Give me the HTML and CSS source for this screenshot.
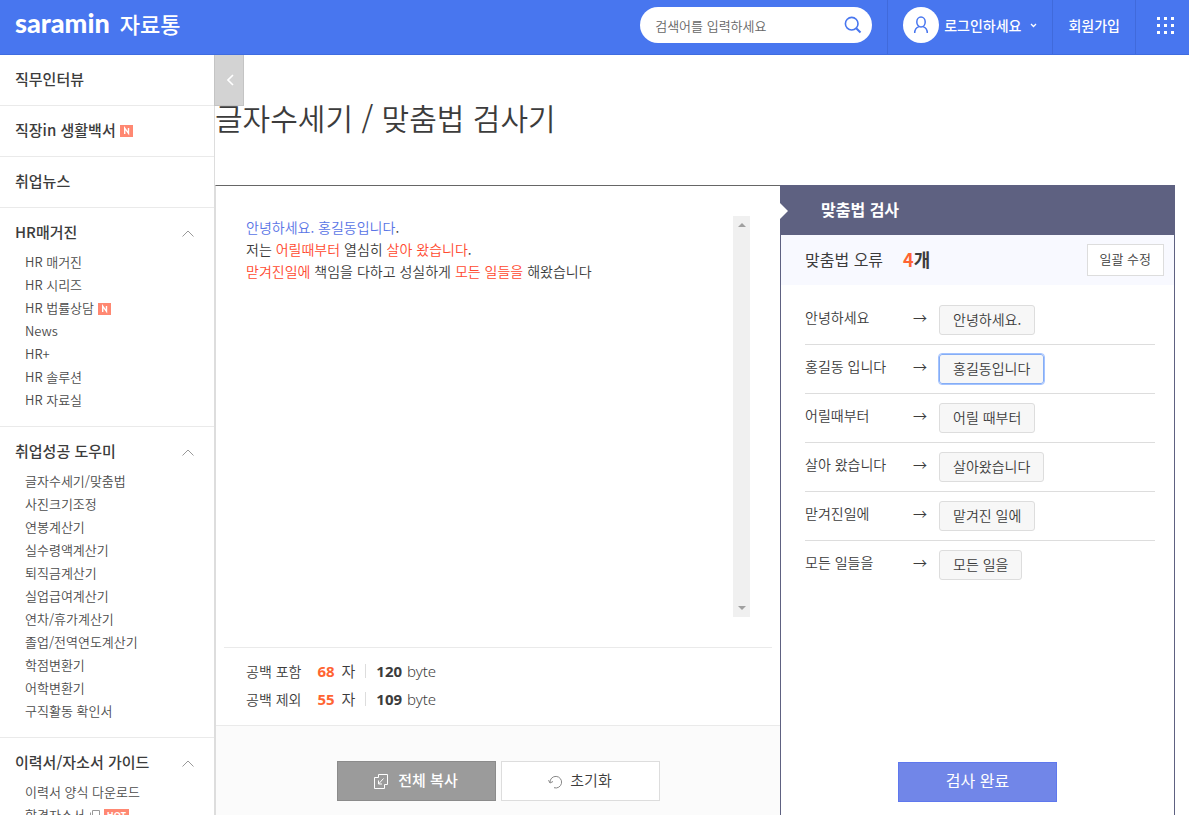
FILE: index.html
```html
<!DOCTYPE html>
<html lang="ko">
<head>
<meta charset="utf-8">
<meta name="viewport" content="width=device-width, initial-scale=1">
<title>글자수세기 / 맞춤법 검사기</title>
<link rel="stylesheet" href="styles.css">
</head>
<body>
<header class="topbar">
  <a class="logo" href="#"><span class="logo-brand">saramin</span><span class="logo-sub">자료통</span></a>
  <form class="search">
    <input class="search-input" type="text" placeholder="검색어를 입력하세요" aria-label="검색어">
    <button class="search-btn" type="button" aria-label="검색">
      <svg width="18" height="18" viewBox="0 0 18 18" fill="none" stroke="#4876ef" stroke-width="1.6"><circle cx="7.7" cy="7.7" r="6.3"/><path d="M12.2 12.2l4.3 4.3" stroke-width="2"/></svg>
    </button>
  </form>
  <nav class="user-nav">
    <a class="user-cell login" href="#">
      <span class="avatar"><svg width="16" height="18" viewBox="0 0 16 18" fill="none" stroke="#4876ef" stroke-width="1.5"><ellipse cx="8" cy="6" rx="4.2" ry="5"/><path d="M1.7 17c0-3.4 1.7-5.6 4.4-6.4M14.3 17c0-3.4-1.7-5.6-4.4-6.4"/></svg></span>
      <span>로그인하세요</span>
      <svg class="caret" width="7" height="5" viewBox="0 0 7 5" fill="none" stroke="#fff" stroke-width="1.3"><path d="M1 1l2.5 2.5L6 1"/></svg>
    </a>
    <a class="user-cell" href="#">회원가입</a>
    <button class="user-cell apps" type="button" aria-label="전체 서비스">
      <svg width="17" height="17" viewBox="0 0 17 17" fill="#fff"><path d="M0 0h3v3H0zM7 0h3v3H7zM14 0h3v3h-3zM0 7h3v3H0zM7 7h3v3H7zM14 7h3v3h-3zM0 14h3v3H0zM7 14h3v3H7zM14 14h3v3h-3z"/></svg>
    </button>
  </nav>
</header>

<div class="shell">
  <aside class="sidebar">
    <section class="group"><h2 class="group-title"><a href="#">직무인터뷰</a></h2></section>
    <section class="group"><h2 class="group-title"><a href="#">직장in 생활백서</a><svg class="badge-new" width="13" height="12" viewBox="0 0 13 12" role="img" aria-label="새 글"><path fill="#ff8872" d="M0 0h13v12H0z"/><path d="M4.7 9V3.2l3.8 5.2V3" fill="none" stroke="#fff" stroke-width="1.4"/></svg></h2></section>
    <section class="group"><h2 class="group-title"><a href="#">취업뉴스</a></h2></section>
    <section class="group">
      <h2 class="group-title"><a href="#">HR매거진</a><svg class="fold" width="12" height="7" viewBox="0 0 12 7" fill="none" stroke="#999"><path d="M.5 6.500L6 1l5.500 5.500"/></svg></h2>
      <ul class="links">
        <li><a href="#">HR 매거진</a></li>
        <li><a href="#">HR 시리즈</a></li>
        <li><a href="#">HR 법률상담</a><svg class="badge-new" width="13" height="12" viewBox="0 0 13 12" role="img" aria-label="새 글"><path fill="#ff8872" d="M0 0h13v12H0z"/><path d="M4.700 9V3.200l3.800 5.200V3" fill="none" stroke="#fff" stroke-width="1.400"/></svg></li>
        <li><a href="#">News</a></li>
        <li><a href="#">HR+</a></li>
        <li><a href="#">HR 솔루션</a></li>
        <li><a href="#">HR 자료실</a></li>
      </ul>
    </section>
    <section class="group">
      <h2 class="group-title"><a href="#">취업성공 도우미</a><svg class="fold" width="12" height="7" viewBox="0 0 12 7" fill="none" stroke="#999"><path d="M.5 6.500L6 1l5.500 5.500"/></svg></h2>
      <ul class="links">
        <li><a href="#">글자수세기/맞춤법</a></li>
        <li><a href="#">사진크기조정</a></li>
        <li><a href="#">연봉계산기</a></li>
        <li><a href="#">실수령액계산기</a></li>
        <li><a href="#">퇴직금계산기</a></li>
        <li><a href="#">실업급여계산기</a></li>
        <li><a href="#">연차/휴가계산기</a></li>
        <li><a href="#">졸업/전역연도계산기</a></li>
        <li><a href="#">학점변환기</a></li>
        <li><a href="#">어학변환기</a></li>
        <li><a href="#">구직활동 확인서</a></li>
      </ul>
    </section>
    <section class="group">
      <h2 class="group-title"><a href="#">이력서/자소서 가이드</a><svg class="fold" width="12" height="7" viewBox="0 0 12 7" fill="none" stroke="#999"><path d="M.5 6.500L6 1l5.500 5.500"/></svg></h2>
      <ul class="links">
        <li><a href="#">이력서 양식 다운로드</a></li>
        <li><a href="#">합격자소서</a><svg class="window-icon" width="11" height="10" viewBox="0 0 11 10" fill="none" stroke="#999"><path d="M3.500.5h7v7h-7zM1.500 2.500v7h7"/></svg><span class="badge-hot">HOT</span></li>
      </ul>
    </section>
  </aside>

  <main class="content">
    <button class="side-toggle" type="button" aria-label="메뉴 접기">
      <svg width="7" height="12" viewBox="0 0 7 12" fill="none" stroke="#fff" stroke-width="1.600"><path d="M6 1L1 6l5 5"/></svg>
    </button>
    <h1 class="page-title">글자수세기 / 맞춤법 검사기</h1>
    <div class="workspace">
      <section class="editor">
        <div class="editor-area">
          <div class="editor-text" contenteditable="true" role="textbox" aria-multiline="true" aria-label="내용">
            <p><span class="fixed">안녕하세요. 홍길동입니다</span>.</p>
            <p>저는 <span class="wrong">어릴때부터</span> 열심히 <span class="wrong">살아 왔습니다</span>.</p>
            <p><span class="wrong">맏겨진일에</span> 책임을 다하고 성실하게 <span class="wrong">모든 일들을</span> 해왔습니다</p>
          </div>
          <div class="scroll-track" aria-hidden="true">
            <svg width="8" height="4" viewBox="0 0 8 4" fill="#a0a0a0"><path d="M0 4l4-4 4 4z"/></svg>
            <svg width="8" height="4" viewBox="0 0 8 4" fill="#a0a0a0"><path d="M0 0l4 4 4-4z"/></svg>
          </div>
        </div>
        <div class="counts">
          <p class="count-row"><span class="count-label">공백 포함</span><span class="chars"><b>68</b> 자</span><span class="bytes"><b>120</b> byte</span></p>
          <p class="count-row"><span class="count-label">공백 제외</span><span class="chars"><b>55</b> 자</span><span class="bytes"><b>109</b> byte</span></p>
        </div>
        <div class="editor-actions">
          <button class="action copy" type="button"><svg width="14" height="15" viewBox="0 0 14 15" fill="none" stroke="#fff"><path d="M4.500 3.500v-3h9v10h-3M4.500 3.500h-4v11h10v-4M9.500 4.500l-5 5.500M4.500 6.500V10H8"/></svg>전체 복사</button>
          <button class="action reset" type="button"><svg width="14" height="14" viewBox="0 0 14 14" fill="none" stroke="#888"><path d="M2 7.500A5.800 5.800 0 1 1 6 12.700M.5 5.200L2 8l3-1.500"/></svg>초기화</button>
        </div>
      </section>

      <section class="checker">
        <h2 class="checker-title">맞춤법 검사</h2>
        <div class="checker-sum">
          <span>맞춤법 오류</span><strong class="sum-count"><em>4</em>개</strong>
          <button class="fix-all" type="button">일괄 수정</button>
        </div>
        <ul class="fixes">
          <li class="fix"><span class="before">안녕하세요</span><span class="arrow">→</span><button class="after" type="button">안녕하세요.</button></li>
          <li class="fix"><span class="before">홍길동 입니다</span><span class="arrow">→</span><button class="after is-focused" type="button">홍길동입니다</button></li>
          <li class="fix"><span class="before">어릴때부터</span><span class="arrow">→</span><button class="after" type="button">어릴 때부터</button></li>
          <li class="fix"><span class="before">살아 왔습니다</span><span class="arrow">→</span><button class="after" type="button">살아왔습니다</button></li>
          <li class="fix"><span class="before">맏겨진일에</span><span class="arrow">→</span><button class="after" type="button">맡겨진 일에</button></li>
          <li class="fix"><span class="before">모든 일들을</span><span class="arrow">→</span><button class="after" type="button">모든 일을</button></li>
        </ul>
        <button class="action done" type="button">검사 완료</button>
      </section>
    </div>
  </main>
</div>
</body>
</html>
```

FILE: styles.css
```css
* { box-sizing: border-box; }
body, h1, h2, p, ul { margin: 0; padding: 0; }
ul { list-style: none; }
a { color: inherit; text-decoration: none; }
button, input { font: inherit; color: inherit; margin: 0; padding: 0; border: 0; background: none; }
button { cursor: pointer; }

body {
  display: flex;
  flex-direction: column;
  height: 100vh;
  overflow: hidden;
  background: #fff;
  color: #3c3c3c;
  font-family: "Noto Sans CJK KR", "Noto Sans", sans-serif;
  font-size: 14px;
  font-weight: 350;
}

/* Top bar */
.topbar {
  display: flex;
  flex: none;
  height: 55px;
  background: #4876ef;
  border-bottom: 1px solid #3f6ce0;
  color: #fff;
}
.logo { display: flex; align-items: center; gap: 10px; padding: 0 0 8px 15px; margin-right: auto; }
.logo-brand { font: 900 27px/32px Lato, sans-serif; }
.logo-sub { font-size: 22px; line-height: 32px; font-weight: 500; }
.search {
  display: flex;
  align-items: center;
  width: 232px;
  height: 36px;
  margin: 7px 15px 0 0;
  padding: 0 10px 0 15px;
  border-radius: 18px;
  background: #fff;
}
.search-input { flex: 1; min-width: 0; color: #666; font-size: 13px; outline: 0; }
.search-input::placeholder { color: #666; opacity: 1; }
.search-btn { display: flex; }
.user-nav { display: flex; font-weight: 500; }
.user-cell {
  display: flex;
  align-items: center;
  padding: 0 15px 4px;
  border-left: 1px solid #406adb;
}
.avatar {
  display: flex;
  align-items: center;
  justify-content: center;
  width: 36px;
  height: 36px;
  margin-right: 5px;
  border-radius: 50%;
  background: #fff;
}
.caret { margin-left: 9px; }
.apps { padding: 0 15px 4px 21px; }

/* Side menu */
.shell { display: flex; flex: 1; min-height: 0; }
.sidebar { flex: none; width: 215px; overflow: hidden; border-right: 1px solid #ddd; }
.group { border-bottom: 1px solid #eaeaea; }
.group-title {
  display: flex;
  align-items: center;
  padding: 12px 20px 14px 15px;
  font-size: 15px;
  line-height: 24px;
  font-weight: 500;
}
.group-title:not(:last-child) { padding-bottom: 6px; }
.badge-new { margin: 2px 0 0 4px; }
.fold { margin: 3px 0 0 auto; }
.links { padding: 0 0 15px 25px; color: #4c4c4c; font-size: 13px; line-height: 23px; }
.links li { display: flex; align-items: center; }
.window-icon { margin: 1px 4px 0 4px; }
.badge-hot {
  padding: 0 3px;
  background: #ff8872;
  color: #fff;
  font: 700 9px/11px "Open Sans", sans-serif;
}

/* Page */
.content { position: relative; flex: 1; min-width: 0; padding-right: 14px; }
.side-toggle {
  position: absolute;
  top: 0;
  left: -1px;
  z-index: 1;
  display: flex;
  align-items: center;
  justify-content: center;
  width: 30px;
  height: 51px;
  padding-left: 2px;
  border: 1px solid #c4c4c4;
  border-top: 0;
  background: #d3d3d3;
}
.page-title { padding: 39px 0 45px; font-size: 30px; line-height: 46px; font-weight: 350; }
.workspace { display: grid; grid-template-columns: minmax(0, 565fr) minmax(0, 395fr); }

/* Editor */
.editor { border-top: 1px solid #666; border-left: 1px solid #ddd; }
.editor-area { display: flex; padding: 30px; }
.editor-text { flex: 1; min-height: 401px; line-height: 22px; outline: 0; }
.fixed { color: #5a75e6; }
.wrong { color: #ff4a30; }
.scroll-track {
  display: flex;
  flex-direction: column;
  align-items: center;
  justify-content: space-between;
  width: 17px;
  padding: 7px 0;
  background: #f0f0f0;
}
.counts { margin: 0 8px; padding: 9px 22px 12px; border-top: 1px solid #eaeaea; }
.count-row { display: flex; align-items: center; line-height: 28px; }
.count-label { margin-right: 16px; }
.chars b { margin-right: 3px; color: #ff6432; }
.chars, .bytes { font-family: "Noto Sans", "Noto Sans CJK KR", sans-serif; font-size: 15px; font-weight: 350; }
.bytes { margin-left: 10px; padding-left: 10px; border-left: 1px solid #ddd; line-height: 14px; }
.bytes b { margin-right: 1px; }
.editor-actions {
  display: flex;
  justify-content: center;
  gap: 5px;
  padding: 35px 0;
  border-top: 1px solid #eaeaea;
  background: #fbfbfb;
}
.action {
  display: flex;
  align-items: center;
  justify-content: center;
  width: 159px;
  height: 40px;
  padding-bottom: 4px;
  border: 1px solid;
  font-size: 15px;
}
.action svg { margin-top: 5px; }
.copy { gap: 10px; border-color: #8b8b8b; background: #9b9b9b; color: #fff; font-weight: 500; }
.reset { gap: 8px; border-color: #ddd; background: #fff; }

/* Spelling results */
.checker {
  position: relative;
  display: flex;
  flex-direction: column;
  padding-bottom: 33px;
  border: 1px solid #5e6181;
  border-top: 0;
}
.checker-title {
  margin: 0 -1px;
  padding: 0 0 2px 41px;
  background: #5e6181;
  color: #fff;
  font-size: 16px;
  line-height: 48px;
  font-weight: 700;
}
.checker-title::before {
  content: "";
  position: absolute;
  top: 18px;
  left: -1px;
  border: 8px solid transparent;
  border-left-color: #fff;
  border-right-width: 0;
}
.checker-sum {
  display: flex;
  align-items: center;
  height: 50px;
  padding: 0 10px 2px 24px;
  background: #f8f9ff;
  font-size: 16px;
  font-weight: 400;
}
.sum-count { margin-left: 20px; font-size: 18px; font-weight: 700; }
.sum-count em { color: #ff6432; font-style: normal; }
.fix-all {
  height: 32px;
  margin: 2px 0 0 auto;
  padding: 0 12px 4px;
  border: 1px solid #ddd;
  background: #fff;
  font-size: 13px;
  font-weight: 350;
}
.fixes { padding: 11px 19px 0 24px; }
.fix { display: flex; height: 49px; border-bottom: 1px solid #ddd; line-height: 42px; }
.fix:last-child { border-bottom: 0; }
.before { width: 108px; }
.arrow { width: 26px; }
.after {
  height: 30px;
  margin-top: 9px;
  padding: 0 13px 2px;
  border: 1px solid #ddd;
  border-radius: 3px;
  background: #f7f7f7;
  line-height: 26px;
}
.is-focused { outline: 1px solid #a3c3ff; border-color: #85adf5; }
.done { margin: auto auto 0; border-color: #5f78ee; background: #7186e8; color: #fff; font-size: 16px; font-weight: 400; }
```
